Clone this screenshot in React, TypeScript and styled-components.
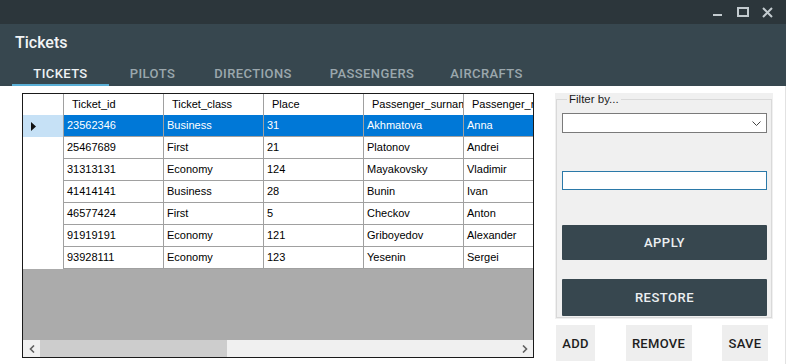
import React from "react";
import styled, { createGlobalStyle } from "styled-components";

const Global = createGlobalStyle`
  html, body { margin: 0; padding: 0; background: #ffffff; }
  body { width: 786px; height: 364px; overflow: hidden; font-family: "Liberation Sans", Arial, sans-serif; }
  * { box-sizing: border-box; }
`;

const Window = styled.div`
  width: 786px;
  height: 364px;
  display: flex;
  flex-direction: column;
  background: #ffffff;
`;

const TitleBar = styled.div`
  height: 24px;
  background: #2c363b;
  display: flex;
  justify-content: flex-end;
  align-items: center;
  padding-right: 10px;
  gap: 8px;
`;

const CtrlBtn = styled.div`
  width: 17px;
  height: 24px;
  display: flex;
  align-items: center;
  justify-content: center;
`;

const Header = styled.div`
  height: 62px;
  background: #37474f;
  display: flex;
  flex-direction: column;
`;

const Title = styled.div`
  margin: 9px 0 0 15px;
  height: 20px;
  line-height: 20px;
  font-family: Roboto, "Liberation Sans", sans-serif;
  font-weight: 500;
  font-size: 16px;
  color: #f2f4f5;
`;

const Tabs = styled.div`
  margin-top: 9px;
  padding-left: 12px;
  display: flex;
`;

const Tab = styled.div<{ $w: number; $active?: boolean }>`
  width: ${(p) => p.$w}px;
  height: 24px;
  line-height: 23px;
  text-align: center;
  font-family: Roboto, "Liberation Sans", sans-serif;
  font-weight: 500;
  font-size: 13px;
  letter-spacing: 0.4px;
  color: ${(p) => (p.$active ? "#eef2f4" : "#9ba7ad")};
  border-bottom: 2px solid ${(p) => (p.$active ? "#5aafd6" : "transparent")};
`;

const Main = styled.div`
  flex: 1;
  display: flex;
  padding: 7px 0 0 22px;
  gap: 21px;
  border-right: 1px solid #e2e2e2;
`;

const Grid = styled.div`
  width: 512px;
  height: 265px;
  border: 1px solid #1a1a1a;
  background: #ababab;
  display: flex;
  flex-direction: column;
  overflow: hidden;
`;

const HeaderRow = styled.div`
  display: flex;
  height: 21px;
  flex-shrink: 0;
  background: #ffffff;
`;

const HeadCell = styled.div<{ $w: number }>`
  width: ${(p) => p.$w}px;
  flex-shrink: 0;
  height: 21px;
  line-height: 21px;
  padding-left: 8px;
  border-right: 1px solid #a0a0a0;
  font-size: 11px;
  color: #000;
  white-space: nowrap;
  overflow: hidden;
`;

const Row = styled.div<{ $sel?: boolean }>`
  display: flex;
  height: 22px;
  flex-shrink: 0;
  background: ${(p) => (p.$sel ? "#0078d7" : "#ffffff")};
  color: ${(p) => (p.$sel ? "#ffffff" : "#000000")};
`;

const RowHead = styled.div<{ $sel?: boolean }>`
  width: 41px;
  flex-shrink: 0;
  height: 22px;
  border-right: 1px solid #a0a0a0;
  background: ${(p) => (p.$sel ? "#c6e1f6" : "#ffffff")};
  display: flex;
  align-items: center;
  padding-left: 8px;
`;

const Cell = styled.div`
  width: 100px;
  flex-shrink: 0;
  height: 22px;
  line-height: 21px;
  padding-left: 3px;
  border-right: 1px solid #a0a0a0;
  border-bottom: 1px solid #a0a0a0;
  font-size: 11px;
  white-space: nowrap;
  overflow: hidden;
`;

const Empty = styled.div`
  flex: 1;
  background: #ababab;
`;

const HScroll = styled.div`
  height: 17px;
  flex-shrink: 0;
  background: #f0f0f0;
  display: flex;
  align-items: stretch;
`;

const ScrollArrow = styled.div`
  width: 17px;
  display: flex;
  align-items: center;
  justify-content: center;
`;

const Thumb = styled.div`
  width: 187px;
  background: #cdcdcd;
`;

const Track = styled.div`
  flex: 1;
`;

const Side = styled.div`
  width: 218px;
  display: flex;
  flex-direction: column;
`;

const GroupArea = styled.div`
  height: 226px;
  background: #f0f0f0;
  padding: 0 1px 1px 1px;
  display: flex;
`;

const Fieldset = styled.fieldset`
  flex: 1;
  margin: 0;
  padding: 7px 4px 0 5px;
  border: 1px solid #d9d9d9;
  display: flex;
  flex-direction: column;
`;

const Legend = styled.legend`
  font-size: 11.5px;
  color: #1a1a1a;
  padding: 0 2px;
  margin-left: 5px;
  line-height: 13px;
`;

const Combo = styled.div`
  height: 20px;
  flex-shrink: 0;
  background: #ffffff;
  border: 1px solid #7a7a7a;
  display: flex;
  align-items: center;
  justify-content: flex-end;
  padding-right: 5px;
`;

const TextBox = styled.div`
  margin-top: 38px;
  height: 19px;
  flex-shrink: 0;
  background: #ffffff;
  border: 1px solid #2b79a8;
`;

const DarkButton = styled.div<{ $mt: number; $h: number }>`
  margin-top: ${(p) => p.$mt}px;
  height: ${(p) => p.$h}px;
  flex-shrink: 0;
  background: #37474f;
  border-radius: 1px;
  display: flex;
  align-items: center;
  justify-content: center;
  font-family: Roboto, "Liberation Sans", sans-serif;
  font-weight: 500;
  font-size: 13px;
  letter-spacing: 0.5px;
  color: #eceff1;
`;

const ActionRow = styled.div`
  margin-top: 6px;
  padding: 0 5px 0 1px;
  display: flex;
  justify-content: space-between;
`;

const FlatButton = styled.div<{ $w: number }>`
  width: ${(p) => p.$w}px;
  height: 36px;
  background: #eeeeee;
  display: flex;
  align-items: center;
  justify-content: center;
  font-family: Roboto, "Liberation Sans", sans-serif;
  font-weight: 500;
  font-size: 13px;
  letter-spacing: 0.3px;
  color: #1e1e1e;
`;

const tabs = [
  { label: "TICKETS", w: 97 },
  { label: "PILOTS", w: 87 },
  { label: "DIRECTIONS", w: 114 },
  { label: "PASSENGERS", w: 124 },
  { label: "AIRCRAFTS", w: 105 },
];

const columns = ["Ticket_id", "Ticket_class", "Place", "Passenger_surname", "Passenger_name"];

const rows = [
  ["23562346", "Business", "31", "Akhmatova", "Anna"],
  ["25467689", "First", "21", "Platonov", "Andrei"],
  ["31313131", "Economy", "124", "Mayakovsky", "Vladimir"],
  ["41414141", "Business", "28", "Bunin", "Ivan"],
  ["46577424", "First", "5", "Checkov", "Anton"],
  ["91919191", "Economy", "121", "Griboyedov", "Alexander"],
  ["93928111", "Economy", "123", "Yesenin", "Sergei"],
];

export default function App() {
  return (
    <Window>
      <Global />
      <TitleBar>
        <CtrlBtn>
          <svg width="10" height="10" viewBox="0 0 10 10">
            <rect x="0" y="7" width="9" height="2" fill="#c3cbcf" />
          </svg>
        </CtrlBtn>
        <CtrlBtn>
          <svg width="12" height="10" viewBox="0 0 12 10">
            <rect x="1" y="1" width="10" height="8" fill="none" stroke="#c3cbcf" strokeWidth="2" />
          </svg>
        </CtrlBtn>
        <CtrlBtn>
          <svg width="11" height="11" viewBox="0 0 11 11">
            <path d="M1 1 L10 10 M10 1 L1 10" stroke="#c3cbcf" strokeWidth="2" />
          </svg>
        </CtrlBtn>
      </TitleBar>
      <Header>
        <Title>Tickets</Title>
        <Tabs>
          {tabs.map((t, i) => (
            <Tab key={t.label} $w={t.w} $active={i === 0}>
              {t.label}
            </Tab>
          ))}
        </Tabs>
      </Header>
      <Main>
        <Grid>
          <HeaderRow>
            <HeadCell $w={41} />
            {columns.map((c) => (
              <HeadCell key={c} $w={100}>
                {c}
              </HeadCell>
            ))}
          </HeaderRow>
          {rows.map((r, i) => (
            <Row key={r[0]} $sel={i === 0}>
              <RowHead $sel={i === 0}>
                {i === 0 && (
                  <svg width="5" height="9" viewBox="0 0 5 9">
                    <path d="M0 0 L5 4.5 L0 9 Z" fill="#111" />
                  </svg>
                )}
              </RowHead>
              {r.map((v, j) => (
                <Cell key={j}>{v}</Cell>
              ))}
            </Row>
          ))}
          <Empty />
          <HScroll>
            <ScrollArrow>
              <svg width="6" height="8" viewBox="0 0 6 8">
                <path d="M5 0.5 L1.5 4 L5 7.5" fill="none" stroke="#606060" strokeWidth="1.6" />
              </svg>
            </ScrollArrow>
            <Thumb />
            <Track />
            <ScrollArrow>
              <svg width="6" height="8" viewBox="0 0 6 8">
                <path d="M1 0.5 L4.5 4 L1 7.5" fill="none" stroke="#606060" strokeWidth="1.6" />
              </svg>
            </ScrollArrow>
          </HScroll>
        </Grid>
        <Side>
          <GroupArea>
            <Fieldset>
              <Legend>Filter by...</Legend>
              <Combo>
                <svg width="9" height="5" viewBox="0 0 9 5">
                  <path d="M0.5 0.5 L4.5 4.5 L8.5 0.5" fill="none" stroke="#444" strokeWidth="1" />
                </svg>
              </Combo>
              <TextBox />
              <DarkButton $mt={35} $h={35}>APPLY</DarkButton>
              <DarkButton $mt={19} $h={37}>RESTORE</DarkButton>
            </Fieldset>
          </GroupArea>
          <ActionRow>
            <FlatButton $w={39}>ADD</FlatButton>
            <FlatButton $w={66}>REMOVE</FlatButton>
            <FlatButton $w={46}>SAVE</FlatButton>
          </ActionRow>
        </Side>
      </Main>
    </Window>
  );
}
